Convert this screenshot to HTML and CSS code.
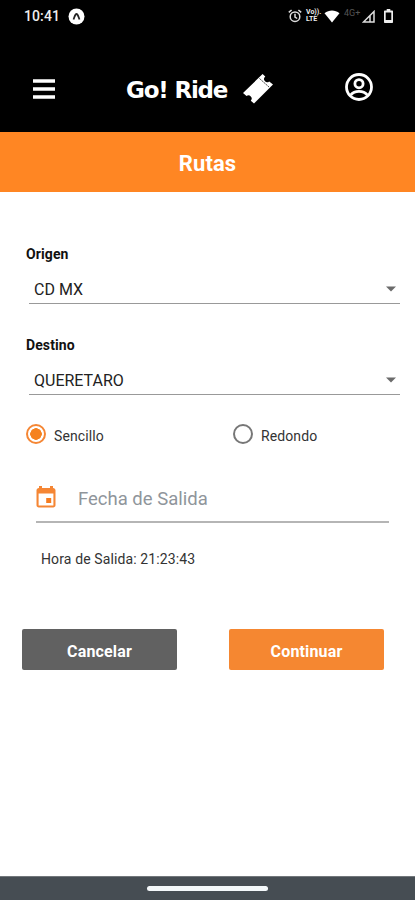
FILE: index.html
```
<!DOCTYPE html>
<html lang="es">
<head>
<meta charset="UTF-8">
<meta name="viewport" content="width=device-width, initial-scale=1.0">
<title>Go! Ride - Rutas</title>
<link rel="stylesheet" href="styles.css">
</head>
<body>

<div class="status-bar">
    <span class="clock">10:41</span>
    <svg class="status-app" width="17" height="17" viewBox="0 0 17 17">
        <circle cx="8.5" cy="8.5" r="8" fill="#fff"/>
        <path d="M5.5 11.5C6.6 9 7 6 8.5 6S10.4 9 11.5 11.5" fill="none" stroke="#222" stroke-width="1.8"/>
    </svg>
    <div class="status-icons">
        <svg width="14" height="14" viewBox="0 0 14 14" fill="none" stroke="#ddd" stroke-width="1.5">
            <circle cx="7" cy="7.7" r="4.8"/>
            <path d="M7 4.8V8l2.2 1.5M.8 3.4L3.6 1M13.2 3.4L10.4 1"/>
        </svg>
        <span class="volte">Vo)).<br>LTE</span>
        <svg class="wifi" width="16" height="13" viewBox="0 0 16 13"><path d="M.5 3.3C5-.5 11-.5 15.5 3.3L8 12.6z" fill="#fff"/></svg>
        <span class="network">4G+</span>
        <svg class="signal" width="13" height="13" viewBox="0 0 13 13"><path d="M12 1.5V12H1.500zM8 6v6" fill="none" stroke="#ddd" stroke-width="1.5"/></svg>
        <svg class="battery" width="9" height="14" viewBox="0 0 9 14"><path d="M2.7 0h3.6v1.5H8c.6 0 1 .4 1 1V13c0 .6-.4 1-1 1H1c-.6 0-1-.4-1-1V2.5c0-.6.4-1 1-1h1.7z" fill="#eee"/><path d="M1.7 3.500h5.600V11H1.700z" fill="#000"/></svg>
    </div>
</div>

<header class="header">
    <button class="icon-button" aria-label="Menu">
        <svg width="22" height="20" viewBox="0 0 22 20"><path d="M0 2h22M0 10h22M0 18h22" stroke="#fff" stroke-width="3.4"/></svg>
    </button>
    <div class="logo">
        <span class="logo-text">Go! Ride</span>
        <svg width="32" height="32" viewBox="0 0 32 32">
            <path d="M20.6 1L23.3 3.6A3 3 0 0 0 27.2 8.5L31 11.5 12 30.5 8.8 27.7A3.2 3.2 0 0 0 4.5 23L1 20z" fill="#fff"/>
            <path d="M17.5 5.5L27 14" stroke="#222" stroke-width=".9" stroke-dasharray="1.8 .9"/>
        </svg>
    </div>
    <button class="icon-button profile" aria-label="Perfil">
        <svg width="28" height="28" viewBox="0 0 28 28" fill="none" stroke="#fff" stroke-width="2.8">
            <circle cx="14" cy="14" r="12.5"/>
            <circle cx="14" cy="10.7" r="4.1"/>
            <path d="M5.8 21.8C9.5 17.2 18.5 17.2 22.2 21.8"/>
        </svg>
    </button>
</header>

<h1 class="title">Rutas</h1>

<form class="form" id="rutasForm">
    <label class="label" for="origen">Origen</label>
    <div class="select-box">
        <select id="origen" name="origen"><option>CD MX</option></select>
        <svg width="10" height="6" viewBox="0 0 10 6"><path d="M0 .5h10L5 5.5z" fill="#6b6b6b"/></svg>
    </div>

    <label class="label" for="destino">Destino</label>
    <div class="select-box">
        <select id="destino" name="destino"><option>QUERETARO</option></select>
        <svg width="10" height="6" viewBox="0 0 10 6"><path d="M0 .5h10L5 5.5z" fill="#6b6b6b"/></svg>
    </div>

    <div class="radios">
        <label class="radio"><input type="radio" name="viaje" value="sencillo" checked><span>Sencillo</span></label>
        <label class="radio"><input type="radio" name="viaje" value="redondo"><span>Redondo</span></label>
    </div>

    <div class="date-box">
        <svg width="20" height="22" viewBox="0 0 20 22">
            <path d="M3 0h3v2h8V0h3v2c1.5 0 2.5 1 2.5 2.3v15c0 1.3-1 2.2-2.3 2.2H2.8C1.5 21.5.5 20.6.5 19.3v-15C.5 3 1.5 2 3 2zM2.6 7.500v12h14.800v-12z" fill="#f58634" fill-rule="evenodd"/>
            <path d="M10.2 12h5v5h-5z" fill="#f57c20"/>
        </svg>
        <input type="text" name="fecha" placeholder="Fecha de Salida">
    </div>

    <p class="hora">Hora de Salida: 21:23:43</p>

    <div class="buttons">
        <button type="button" class="btn cancel">Cancelar</button>
        <button type="submit" class="btn continue">Continuar</button>
    </div>
</form>

<div class="nav-bar"><span class="handle"></span></div>

</body>
</html>
```
FILE: styles.css
```
* {
    box-sizing: border-box;
}
body {
    font-family: Roboto, sans-serif;
    margin: 0;
    height: 900px;
    display: flex;
    flex-direction: column;
    background-color: #fff;
    overflow: hidden;
}
svg {
    display: block;
    flex: none;
}
button, input, select {
    font-family: inherit;
    margin: 0;
    padding: 0;
    border: none;
    background: none;
}
.status-bar {
    height: 32px;
    padding: 0 22px 0 24px;
    display: flex;
    align-items: center;
    background-color: #000;
    color: #eee;
}
.clock {
    font-size: 14px;
    font-weight: 500;
    letter-spacing: 0.1px;
}
.status-app {
    margin-left: 8px;
}
.status-icons {
    margin-left: auto;
    display: flex;
    align-items: center;
}
.volte {
    width: 15px;
    margin-left: 4px;
    font-size: 7px;
    line-height: 7px;
    font-weight: 700;
}
.wifi {
    margin-left: 3px;
}
.network {
    width: 16px;
    margin: -6px 2px 0 4px;
    font-size: 9px;
    color: #555;
}
.battery {
    margin-left: 9px;
}
.header {
    height: 100px;
    padding: 14px 42px 0 33px;
    display: flex;
    align-items: center;
    background-color: #000;
}
.profile {
    margin: -5px 0 0 auto;
}
.logo {
    display: flex;
    align-items: center;
    gap: 15px;
    margin-left: 71px;
}
.logo-text {
    width: 101px;
    padding-top: 1px;
    font-family: "DejaVu Sans", sans-serif;
    font-size: 23px;
    font-weight: 700;
    letter-spacing: -1.2px;
    white-space: nowrap;
    color: #fff;
}
.title {
    height: 60px;
    margin: 0;
    padding-top: 2px;
    background-color: #ff8623;
    color: #fff;
    font-size: 22px;
    line-height: 60px;
    font-weight: 700;
    letter-spacing: 0.1px;
    text-align: center;
}
.form {
    flex: 1;
    padding: 51px 15px 0 26px;
}
.label {
    display: block;
    height: 22px;
    font-size: 14px;
    line-height: 22px;
    font-weight: 700;
    letter-spacing: 0.1px;
    color: #111;
}
.select-box {
    display: flex;
    align-items: center;
    height: 39px;
    margin: 0 0 30px 3px;
    padding: 10px 4px 0 5px;
    border-bottom: 1px solid #999;
}
.select-box select {
    flex: 1;
    height: 28px;
    appearance: none;
    font-size: 16px;
    color: #222;
}
.radios {
    display: flex;
    margin-top: -2px;
}
.radio {
    display: flex;
    flex: none;
    align-items: center;
    width: 207px;
    height: 22px;
    gap: 8px;
    font-size: 14px;
    letter-spacing: 0.1px;
    color: #333;
}
.radio:last-child {
    width: 150px;
}
.radio span {
    padding-top: 3px;
}
.radio input {
    appearance: none;
    width: 20px;
    height: 20px;
    border: 2px solid #777;
    border-radius: 50%;
}
.radio input:checked {
    border-color: #f58634;
    background: radial-gradient(circle, #f58220 5.5px, transparent 6px);
}
.date-box {
    display: flex;
    align-items: center;
    gap: 22px;
    height: 52px;
    margin: 26px 11px 0 10px;
    padding-top: 1px;
    border-bottom: 2px solid #b5b5b5;
}
.date-box input {
    width: 200px;
    padding-top: 4px;
    font-size: 18.5px;
}
.date-box input::placeholder {
    color: #8f959b;
}
.hora {
    margin: 27px 0 0 15px;
    font-size: 14px;
    line-height: 18px;
    letter-spacing: 0.12px;
    color: #333;
}
.buttons {
    display: flex;
    gap: 52px;
    margin: 61px 0 0 -4px;
}
.btn {
    width: 155px;
    height: 41px;
    padding-top: 3px;
    border-radius: 2px;
    font-size: 16px;
    font-weight: 700;
    letter-spacing: 0.15px;
    color: #fff;
}
.cancel {
    background-color: #616161;
}
.continue {
    background-color: #f58731;
}
.nav-bar {
    height: 24px;
    display: flex;
    align-items: center;
    justify-content: center;
    background-color: #464d53;
    border-top: 1px solid #72777b;
}
.handle {
    width: 121px;
    height: 5px;
    border-radius: 3px;
    background-color: #f4f8fa;
}
```
